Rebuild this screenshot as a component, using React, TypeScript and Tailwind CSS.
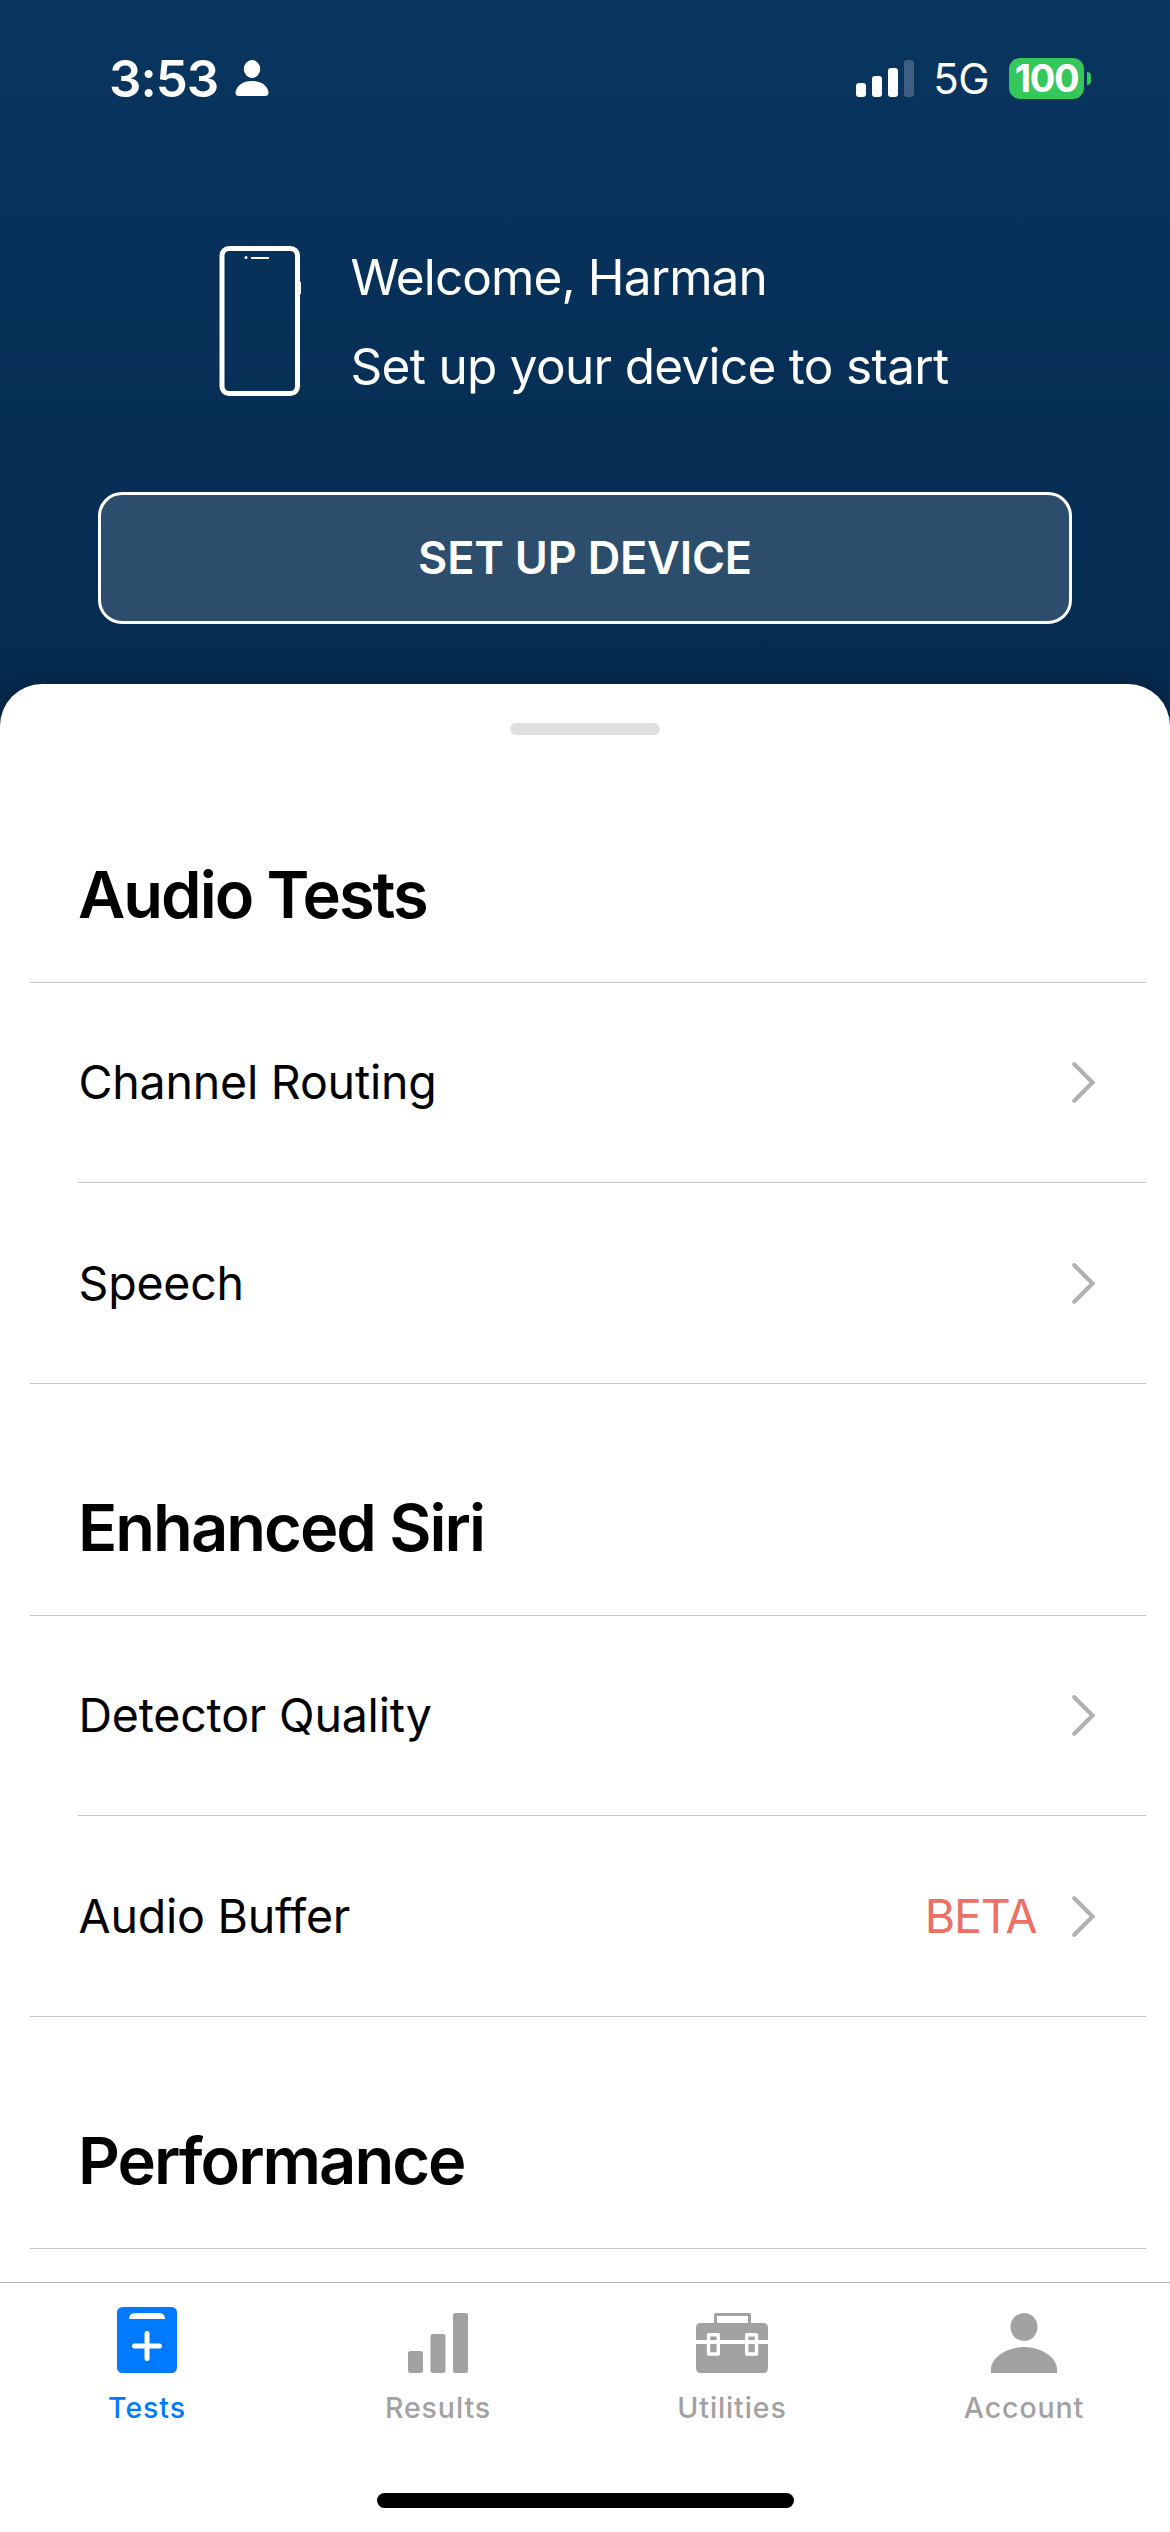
import React from "react";

function Chevron() {
  return (
    <svg width="26" height="43" viewBox="0 0 26 43" className="ml-[35.5px] block">
      <path d="M2.300 3.300 L20.500 21.500 L2.300 39.700" fill="none" stroke="#b0b0b0" strokeWidth="4.2" strokeLinecap="round" strokeLinejoin="miter" />
    </svg>
  );
}

function Row({ label, badge, last }: { label: string; badge?: string; last?: boolean }) {
  return (
    <div>
      <div className={`flex items-center pl-[78.5px] pr-[72px] ${last ? "h-[200px]" : "h-[199px]"}`}>
        <span className="text-[46.5px] leading-none tracking-[-0.2px] text-black">{label}</span>
        <span className="ml-auto text-[46.5px] leading-none tracking-[-1.2px] text-[#ec7063]">{badge}</span>
        <Chevron />
      </div>
      <div className={last ? "ml-[30px] mr-6 h-px bg-[#c3c3c5]" : "ml-[78px] mr-6 h-px bg-[#c3c3c5]"} />
    </div>
  );
}

function Section({ title, children }: { title: string; children?: React.ReactNode }) {
  return (
    <section>
      <div className="flex h-[231px] items-end pl-[78px] pb-[55px]">
        <h2 className="text-[65px] font-semibold leading-none tracking-[-2px] text-black">{title}</h2>
      </div>
      <div className="ml-[30px] mr-6 h-px bg-[#c3c3c5]" />
      {children}
    </section>
  );
}

function Tab({ label, active, children }: { label: string; active?: boolean; children: React.ReactNode }) {
  return (
    <div className={`flex flex-col items-center pt-6 ${active ? "text-[#007aff]" : "text-[#a2a2a2]"}`}>
      <svg width="72" height="66" viewBox="0 0 72 66" fill="currentColor">{children}</svg>
      <span className="mt-5 text-[28.5px] font-medium leading-[30px] tracking-[0.9px]">{label}</span>
    </div>
  );
}

export default function App() {
  return (
    <div className="flex h-[2532px] w-[1170px] flex-col overflow-hidden bg-[linear-gradient(#08355f_0px,#062b50_684px,#062b50_100%)] font-['Inter',sans-serif]">
      <div className="flex h-[156px] items-center pl-[109px] pr-[79px] text-white">
        <span className="w-[109px] whitespace-nowrap text-[51px] font-[570] leading-none tracking-[-1px]">3:53</span>
        <svg width="34" height="36" viewBox="0 0 34 36" className="ml-[17px]" fill="#fff">
          <ellipse cx="17" cy="9" rx="8.2" ry="9" />
          <path d="M4 36 Q0.5 36 0.5 32.5 C1.5 25.5 8 21 17 21 S32.500 25.500 33.500 32.500 Q33.500 36 30 36Z" />
        </svg>
        <svg width="58" height="37" viewBox="0 0 58 37" className="ml-auto" fill="#fff">
          <rect y="23" width="10" height="14" rx="3" />
          <rect x="16" y="16" width="10" height="21" rx="3" />
          <rect x="32" y="8" width="10" height="29" rx="3" />
          <rect x="48" y="0" width="10" height="37" rx="3" fillOpacity=".22" />
        </svg>
        <span className="ml-[19px] mt-[2px] text-[42px] leading-none tracking-[-0.5px]">5G</span>
        <span className="ml-5 flex h-[41px] w-[75px] items-center justify-center rounded-[11px] bg-[#34c759] text-[38px] font-bold leading-none tracking-[-1.4px]">100</span>
        <span className="ml-[3px] h-[13px] w-1 rounded-r-full bg-[#34c759]" />
      </div>
      <div className="flex h-[336px] pl-[219px] pt-[90px] text-white">
        <svg width="83" height="150" viewBox="0 0 83 150">
          <rect x="3" y="2.500" width="75.500" height="145" rx="7" fill="none" stroke="#fff" strokeWidth="5" />
          <circle cx="27" cy="11.500" r="1.500" fill="#fff" />
          <path d="M32 12H50" stroke="#fff" strokeWidth="2" />
          <path d="M81 36V48" stroke="#fff" strokeWidth="2" />
        </svg>
        <div className="ml-[48.5px] text-[49.5px] leading-[89px]">
          <p className="-mt-[13.5px] tracking-[-0.9px]">Welcome, Harman</p>
          <p className="tracking-[-0.7px]">Set up your device to start</p>
        </div>
      </div>
      <button className="mx-[98px] flex h-[132px] shrink-0 items-center justify-center rounded-[24px] border-[3px] border-white bg-[#2c4d6b] text-[45px] font-[640] tracking-[-0.2px] text-white">
        SET UP DEVICE
      </button>
      <main className="mt-[60px] h-[1598px] shrink-0 overflow-hidden rounded-t-[42px] bg-white shadow-[0_0_24px_rgba(0,0,0,0.3)]">
        <div className="mx-auto mt-[39px] mb-[16px] h-3 w-[150px] rounded-full bg-[#e0e0e0]" />
        <Section title="Audio Tests">
          <Row label="Channel Routing" />
          <Row label="Speech" last />
        </Section>
        <Section title="Enhanced Siri">
          <Row label="Detector Quality" />
          <Row label="Audio Buffer" badge="BETA" last />
        </Section>
        <Section title="Performance" />
      </main>
      <footer className="flex h-[250px] shrink-0 flex-col border-t border-[#b0b0b0] bg-white">
        <nav className="grid grid-cols-[294px_288px_300px_284px]">
          <Tab label="Tests" active>
            <rect x="6" width="60" height="66" rx="5.500" />
            <path d="M18 12 Q18 6 24 6H48Q54 6 54 12Z" fill="#fff" />
            <path d="M36 26.500V51.500M23.500 39H48.500" stroke="#fff" strokeWidth="5" strokeLinecap="round" />
          </Tab>
          <Tab label="Results">
            <rect x="6" y="44" width="15" height="22" rx="2.500" />
            <rect x="28.500" y="27" width="15" height="39" rx="2.500" />
            <rect x="51" y="6" width="15" height="60" rx="2.500" />
          </Tab>
          <Tab label="Utilities">
            <path d="M19.500 18V7.500H53.500V18" fill="none" stroke="currentColor" strokeWidth="3" strokeLinejoin="round" />
            <path d="M5 16H67Q72 16 72 21V33H0V21Q0 16 5 16ZM0 37H72V61Q72 66 67 66H5Q0 66 0 61Z" />
            <path d="M12.500 27.800H22.300V47H12.500ZM50.700 27.800H60.500V47H50.700Z" stroke="#fff" strokeWidth="3.4" strokeLinejoin="round" />
            <path d="M14 33h7v4h-7zM52 33h7v4h-7z" fill="#fff" />
          </Tab>
          <Tab label="Account">
            <ellipse cx="36" cy="20" rx="13.500" ry="14" />
            <path d="M3 66V62C3 51 18 40 36 40S69 51 69 62V66Z" />
          </Tab>
        </nav>
        <div className="mx-auto mt-auto mb-6 h-[15px] w-[417px] rounded-full bg-black" />
      </footer>
    </div>
  );
}
